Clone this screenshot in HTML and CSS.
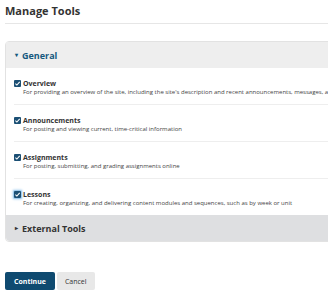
FILE: index.html
```html
<!DOCTYPE html>
<html lang="en">

<head>
    <meta charset="UTF-8">
    <title>Manage Tools</title>
    <link rel="stylesheet" href="styles.css">
</head>

<body>
    <div class="page">
        <h1 class="page-title">Manage Tools</h1>

        <div class="tool-group">
            <div class="group-header open">
                <span class="caret">&#9662;</span> General
            </div>
            <div class="group-body">
                <div class="tool">
                    <span class="check"><svg viewBox="0 0 8 8"><path d="M1.6 4.2 L3.3 5.8 L6.5 2.2" /></svg></span>
                    <div class="tool-text">
                        <div class="tool-name">Overview</div>
                        <div class="tool-desc">For providing an overview of the site, including the site's description and recent announcements, messages, and more</div>
                    </div>
                </div>
                <div class="tool">
                    <span class="check"><svg viewBox="0 0 8 8"><path d="M1.6 4.2 L3.3 5.8 L6.5 2.2" /></svg></span>
                    <div class="tool-text">
                        <div class="tool-name">Announcements</div>
                        <div class="tool-desc">For posting and viewing current, time-critical information</div>
                    </div>
                </div>
                <div class="tool">
                    <span class="check"><svg viewBox="0 0 8 8"><path d="M1.6 4.2 L3.3 5.8 L6.5 2.2" /></svg></span>
                    <div class="tool-text">
                        <div class="tool-name">Assignments</div>
                        <div class="tool-desc">For posting, submitting, and grading assignments online</div>
                    </div>
                </div>
                <div class="tool">
                    <span class="check focus"><svg viewBox="0 0 8 8"><path d="M1.6 4.2 L3.3 5.8 L6.5 2.2" /></svg></span>
                    <div class="tool-text">
                        <div class="tool-name">Lessons</div>
                        <div class="tool-desc">For creating, organizing, and delivering content modules and sequences, such as by week or unit</div>
                    </div>
                </div>
            </div>
            <div class="group-header closed">
                <span class="caret">&#9656;</span> External Tools
            </div>
        </div>

        <div class="actions">
            <button class="btn primary">Continue</button>
            <button class="btn">Cancel</button>
        </div>
    </div>
</body>

</html>
```

FILE: styles.css
```css
html,
body {
    margin: 0;
    overflow: hidden;
}

body {
    font-family: 'Open Sans', 'Liberation Sans', sans-serif;
    color: #333;
    background-color: white;
}

.page {
    width: 420px;
    padding: 5px;
}

.page-title {
    font-size: 11px;
    font-weight: 700;
    line-height: 12px;
    margin: 0;
    padding-bottom: 6px;
    border-bottom: 1px solid #e6e6e6;
}

.tool-group {
    margin-top: 17px;
    border: 1px solid #e2e2e2;
    border-radius: 4px;
}

.group-header {
    height: 26px;
    display: flex;
    align-items: center;
    padding-left: 9px;
    font-size: 9px;
    font-weight: 700;
}

.group-header.open {
    background-color: #eeeeee;
    color: #15597e;
}

.group-header.closed {
    background-color: #dedfe1;
    color: #333;
    border-radius: 0 0 4px 4px;
}

.caret {
    font-size: 6px;
    margin-right: 4px;
}

.group-body {
    padding: 0 0 0 8px;
}

.tool {
    display: flex;
    align-items: flex-start;
    padding: 11px 0 8px;
    border-bottom: 1px solid #eeeeee;
}

.tool:last-child {
    border-bottom: none;
}

.check {
    width: 7px;
    height: 7px;
    margin-right: 2px;
    margin-top: 1px;
    background-color: #1b4f74;
    border-radius: 1px;
    display: flex;
}

.check svg {
    width: 7px;
    height: 7px;
    fill: none;
    stroke: white;
    stroke-width: 1.2;
}

.check.focus {
    box-shadow: 0 0 0 1px #9ecaed, 0 0 2px 2px #cfe5f7;
}

.tool-name {
    font-size: 7px;
    font-weight: 700;
    line-height: 9px;
}

.tool-desc {
    font-size: 6px;
    line-height: 8px;
    color: #444;
    white-space: nowrap;
}

.actions {
    margin-top: 30px;
    display: flex;
    gap: 2px;
}

.btn {
    font-family: inherit;
    font-size: 7px;
    height: 18px;
    padding: 0 8px;
    border: none;
    border-radius: 2px;
    background-color: #e8e8e8;
    color: #333;
}

.btn.primary {
    background-color: #0f4a70;
    color: white;
    font-weight: 700;
    padding: 0 9px;
}
```
